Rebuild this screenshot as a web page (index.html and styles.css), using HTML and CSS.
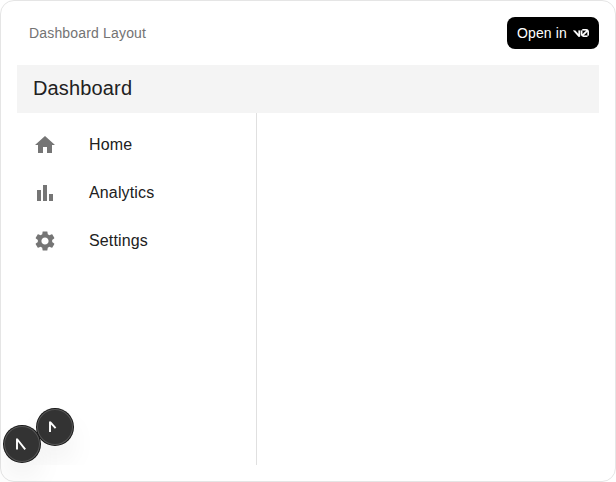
FILE: index.html
```html
<!DOCTYPE html>
<html lang="en">
<head>
<meta charset="utf-8">
<title>Dashboard Layout</title>
<link rel="stylesheet" href="styles.css">
</head>
<body>
<main class="card">
  <header class="toolbar">
    <span class="caption">Dashboard Layout</span>
    <a class="open-button"><span class="open-label">Open in</span>
      <svg class="v0" viewBox="0 0 40 20" fill="currentColor"><path d="M23.392 0H32.919C36.782 0 39.914 3.132 39.914 6.995V16.08H36V6.995L35.99 6.718L26.463 16.079L26.56 16.08H36V19.776H26.56C22.696 19.776 19.479 16.614 19.479 12.751V3.689H23.392V12.751L23.432 13.267L33.168 3.7L32.919 3.689H23.392Z"/><path d="M13.769 19.096L0 3.688H5.539L13.623 12.734V3.688H17.754V17.575C17.754 19.671 15.165 20.658 13.769 19.096Z"/></svg>
    </a>
  </header>
  <section class="preview">
    <h1 class="appbar">Dashboard</h1>
    <nav class="sidebar">
      <a class="item"><svg class="icon" viewBox="0 0 24 24"><path d="M10 20v-6h4v6h5v-8h3L12 3 2 12h3v8z"/></svg><span class="item-label">Home</span></a>
      <a class="item"><svg class="icon" viewBox="0 0 24 24"><path d="M4 9h4v11H4zm12 4h4v7h-4zm-6-9h4v16h-4z"/></svg><span class="item-label">Analytics</span></a>
      <a class="item"><svg class="icon" viewBox="0 0 24 24"><path d="M19.14 12.94c.04-.3.06-.61.06-.94 0-.32-.02-.64-.07-.94l2.03-1.58c.18-.14.23-.41.12-.61l-1.92-3.32c-.12-.22-.37-.29-.59-.22l-2.39.96c-.5-.38-1.03-.7-1.62-.94l-.36-2.54c-.04-.24-.24-.41-.48-.41h-3.84c-.24 0-.43.17-.47.41l-.36 2.54c-.59.24-1.13.57-1.62.94l-2.39-.96c-.22-.08-.47 0-.59.22L2.74 8.87c-.12.21-.08.47.12.61l2.03 1.58c-.05.3-.09.63-.09.94s.02.64.07.94l-2.03 1.58c-.18.14-.23.41-.12.61l1.92 3.32c.12.22.37.29.59.22l2.39-.96c.5.38 1.03.7 1.62.94l.36 2.54c.05.24.24.41.48.41h3.84c.24 0 .44-.17.47-.41l.36-2.54c.59-.24 1.13-.56 1.62-.94l2.39.96c.22.08.47 0 .59-.22l1.92-3.32c.12-.22.07-.47-.12-.61zM12 15.6c-1.98 0-3.6-1.62-3.6-3.6s1.62-3.6 3.6-3.6 3.6 1.62 3.6 3.6-1.62 3.6-3.6 3.6"/></svg><span class="item-label">Settings</span></a>
    </nav>
    <div class="badge badge-inner"><svg class="mark" viewBox="0 0 36 36"><path d="M13 23V12.4M13 13L18.6 19.2"/></svg></div>
  </section>
</main>
<div class="badge badge-outer"><svg class="mark" viewBox="0 0 36 36"><path d="M13 23.6V12.4M13 13L21.2 23.4"/></svg></div>
</body>
</html>
```
FILE: styles.css
```css
* { box-sizing: border-box; }
body {
  margin: 0;
  height: 482px;
  overflow: hidden;
  background: #fff;
  font-family: "Liberation Sans", Arial, sans-serif;
}
.card {
  height: 482px;
  padding: 16px;
  border: 1px solid #e5e5e5;
  border-radius: 14px;
}
.toolbar {
  display: flex;
  align-items: center;
  justify-content: space-between;
  height: 32px;
  margin-bottom: 16px;
  padding-left: 12px;
}
.caption { font-size: 14px; letter-spacing: 0.17px; color: #737373; }
.open-button {
  display: flex;
  align-items: center;
  justify-content: space-between;
  width: 92px;
  height: 32px;
  padding: 0 10px;
  border-radius: 8px;
  background: #000;
  color: #fff;
  font-size: 14px;
}
.open-label { letter-spacing: 0.12px; white-space: nowrap; }
.v0 { width: 16px; height: 8px; stroke: #fff; stroke-width: 0.5; }
.preview {
  position: relative;
  display: flex;
  flex-direction: column;
  height: 400px;
  overflow: hidden;
}
.appbar {
  flex: none;
  height: 48px;
  margin: 0;
  padding-left: 16px;
  background: #f4f4f4;
  color: #212121;
  font-size: 20px;
  font-weight: 400;
  letter-spacing: 0.15px;
  line-height: 46px;
}
.sidebar {
  flex: 1;
  width: 240px;
  padding-top: 8px;
  border-right: 1px solid #e0e0e0;
}
.item {
  display: flex;
  align-items: center;
  height: 48px;
  padding-left: 16px;
  color: #212121;
  font-size: 16px;
  letter-spacing: 0.15px;
}
.icon { width: 24px; height: 24px; margin-right: 32px; fill: #757575; }
.badge {
  position: absolute;
  width: 36px;
  height: 36px;
  border-radius: 50%;
  background: #333;
  box-shadow: 0 0 0 1px #171717, inset 0 0 0 1px rgba(255,255,255,.18), 0 16px 32px -8px rgba(0,0,0,.2);
}
.badge-inner { left: 20px; top: 344px; }
.badge-outer { left: 4px; top: 426px; }
.mark { display: block; width: 36px; height: 36px; fill: none; stroke: #fff; stroke-width: 1.9; }
```
